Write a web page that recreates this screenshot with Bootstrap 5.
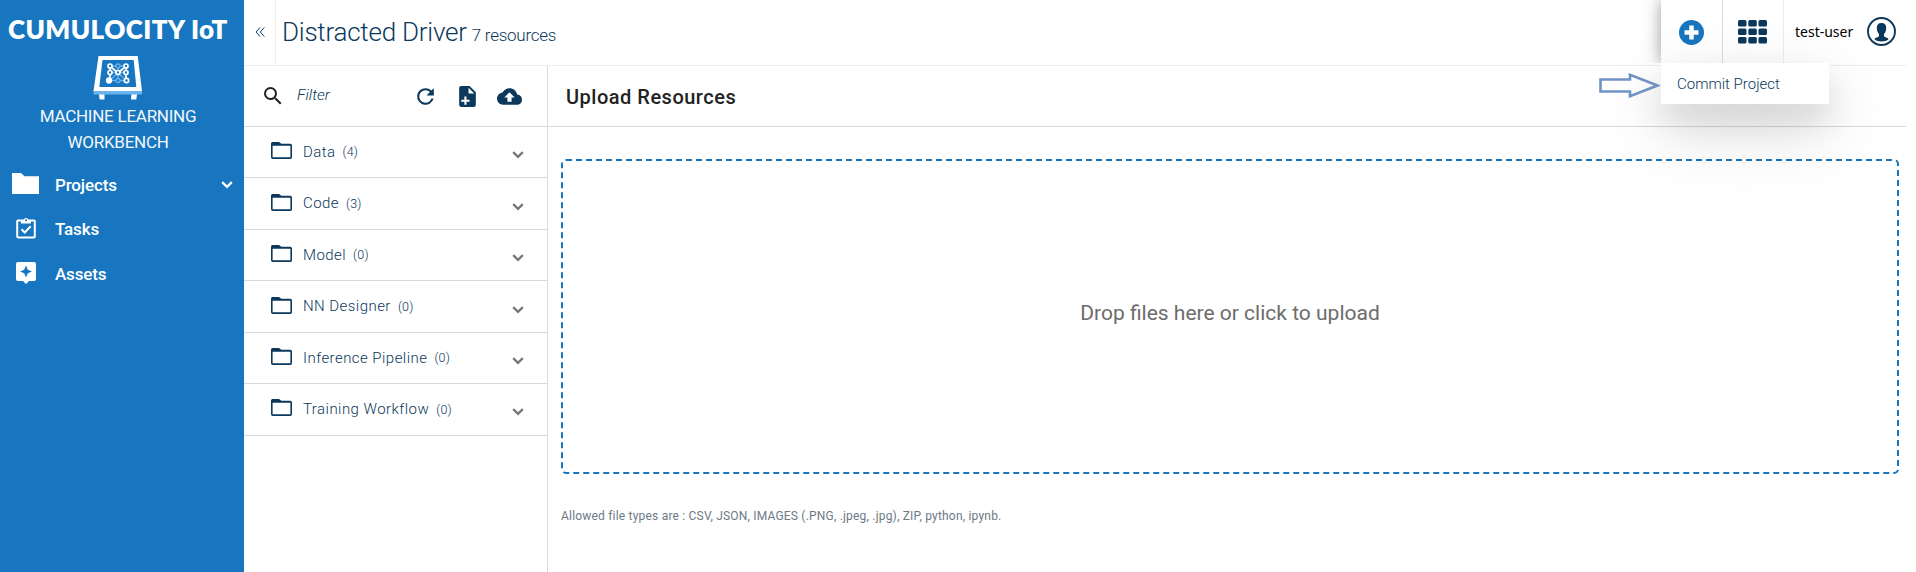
<!DOCTYPE html>
<html lang="en">
<head>
<meta charset="utf-8">
<meta name="viewport" content="width=device-width, initial-scale=1">
<title>Machine Learning Workbench</title>
<link href="https://cdn.jsdelivr.net/npm/bootstrap@5.3.0/dist/css/bootstrap.min.css" rel="stylesheet">
<style>
:root{--brand:#1776bf;--ink:#0b385b;--line:#d9d9d9}
body{font-family:Roboto,"Liberation Sans",sans-serif;font-size:16px;color:var(--ink);height:572px;overflow:hidden;background:#fff}
svg{display:block;flex:none}
.side{width:244px;background:var(--brand);color:#fff}
.logo{font:800 26px/30px Lato,sans-serif;padding:14px 0 0 8px;white-space:nowrap;letter-spacing:.4px}
.bench{margin:12px 0 0 93px}
.product{font-size:17px;line-height:26px;letter-spacing:-.25px;font-weight:400;opacity:.95;padding-right:8px;margin-top:3px}
.navlist{margin-top:8px}
.side .nav-link{height:44.5px;color:#fff;font-weight:500;font-size:17px;letter-spacing:-.15px;padding:0 11px 0 12px}
.side .ico{width:43px}
.side .ico svg{margin-top:-3px}
.topbar{height:66px;border-bottom:1px solid #eee;margin-right:10px}
.collapse-btn{width:32px;border-right:1px solid #eee;padding-bottom:2px}
.ttl{font-size:26px;font-weight:300;letter-spacing:-.24px;line-height:64px;margin:0 0 0 6px}
.ttl small{font-size:17px;letter-spacing:-.26px;margin-left:-1px}
.cell{width:61px}
.cell-open{background:#fff;box-shadow:0 0 16px rgba(0,0,0,.4);clip-path:inset(0 0 0 -40px);height:63px;padding-top:2px}
.cell-apps{border-left:1px solid #ddd;padding:0 2px 2px 0}
.menu{left:0;top:63px;width:168px;height:41px;background:#fff;padding-left:16px;font-size:15px;font-weight:300;line-height:42px;box-shadow:0 24px 70px rgba(0,0,0,.16),0 18px 32px rgba(0,0,0,.1);z-index:5}
.user{font:14px "Noto Sans",sans-serif;color:#000;border-left:1px solid #eee;padding:0 10px 2px 11px;width:123px}
.arrow{right:246px;top:73px;z-index:6}
.tree{width:304px;border-right:1px solid var(--line)}
.tools{height:61px;border-bottom:1px solid var(--line);padding:0 25px 0 17px}
.filter{font-style:italic;font-weight:300;font-size:15.500px;width:116px;margin-left:12px}
.rowitem{height:51.45px;border-bottom:1px solid var(--line);padding:0 23px 0 27px;font-size:15px}
.rowitem .dir{margin-top:-3px}
.rowitem .cv{margin-top:6px;color:#777}
.rowitem .nm{margin-left:11px;font-weight:300;letter-spacing:.45px}
.rowitem .ct{margin-left:7px;font-size:12.500px;font-weight:300;letter-spacing:.2px;padding-top:1px}
.head{height:61px;border-bottom:1px solid var(--line);margin-right:10px;padding:1px 0 0 18px;font-size:20px;font-weight:500;color:#222;letter-spacing:.5px}
.drop{margin:32px 17px 0 13px;height:315px;border:2px dashed var(--brand);border-radius:5px;font-size:21px;color:#6c6c6c;padding-bottom:6px}
.note{font-size:12px;color:#6c7a86;margin:33px 0 0 13px;letter-spacing:.2px}
</style>
</head>
<body>
<svg class="d-none">
<symbol id="dir" viewBox="0 0 21 17"><path d="M2 0h6l2.400 1.700H19.200a1.800 1.800 0 0 1 1.800 1.800v11.700a1.800 1.800 0 0 1-1.800 1.800H1.800A1.800 1.800 0 0 1 0 15.200V1.800A1.800 1.800 0 0 1 2 0zM1.600 3.700V15.200h17.800V3.700z" fill="#0b385b" fill-rule="evenodd"/></symbol>
<symbol id="chev" viewBox="0 0 12 8"><path d="M1.200 1.200L6 5.800l4.800-4.600" fill="none" stroke="currentColor" stroke-width="2.300"/></symbol>
</svg>
<div class="d-flex h-100">
  <aside class="side flex-shrink-0 d-flex flex-column">
    <div class="logo">CUMULOCITY IoT</div>
    <svg class="bench" width="50" height="44" viewBox="0 0 50 44">
      <path d="M5.500 35h6v8.500H6.700zM38.500 35H44.500l-1.200 8.500h-5.300z" fill="#fff"/>
      <path d="M.5 34h48.500v4.500H.5z" fill="#69b3ee"/>
      <path fill-rule="evenodd" d="M5.500 0h39.200L49 35H.5zM9.500 4L6.300 31h37L40.700 4z" fill="#fff"/>
      <g fill="none" stroke="#69b3ee" stroke-width="1.300"><path d="M17 10h16M17 24.500h16M25 10v14M17 16.500h16M17 24l8-7 8 7"/><circle cx="25" cy="10" r="2" fill="#1776bf"/><circle cx="25" cy="24.500" r="2" fill="#1776bf"/></g>
      <g fill="#1776bf" stroke="#fff" stroke-width="1.700"><path fill="none" d="M17 24.500V10l8 7 8-7v14.500"/><circle cx="17" cy="10" r="2"/><circle cx="33" cy="10" r="2"/><circle cx="17" cy="16.500" r="2"/><circle cx="25" cy="16.500" r="2"/><circle cx="33" cy="16.500" r="2"/><circle cx="33.500" cy="24.500" r="2.200"/><circle cx="16" cy="24.500" r="2.300" fill="#fff"/></g>
    </svg>
    <div class="product text-center">MACHINE LEARNING<br>WORKBENCH</div>
    <nav class="nav flex-column flex-nowrap navlist">
      <a class="nav-link d-flex align-items-center" href="#"><span class="ico"><svg width="27" height="21" viewBox="0 0 27 21"><path d="M0 0h9l3.500 3.200H27V21H0z" fill="#fff"/></svg></span>Projects<svg class="ms-auto" width="12" height="8"><use href="#chev"/></svg></a>
      <a class="nav-link d-flex align-items-center" href="#"><span class="ico ps-1"><svg width="20" height="22" viewBox="0 0 20 22"><path fill="none" stroke="#fff" stroke-width="2" d="M2 3.500h16a.8.8 0 0 1 .8.8V19.600a.8.8 0 0 1-.8.8H2a.8.800 0 0 1-.8-.8V4.300A.8.8 0 0 1 2 3.500z"/><path d="M5 6.500V3h2.500a2.600 2.600 0 0 1 5 0H15v3.500z" fill="#fff"/><circle cx="10" cy="3.200" r="1" fill="#1776bf"/><path d="M5.500 12.300l3.200 3.200 6-6.200" fill="none" stroke="#fff" stroke-width="2"/></svg></span>Tasks</a>
      <a class="nav-link d-flex align-items-center" href="#"><span class="ico ps-1"><svg width="20" height="22" viewBox="0 0 20 22"><path fill="#fff" d="M2 0h16a2 2 0 0 1 2 2v15a2 2 0 0 1-2 2h-5l-3 3-3-3H2a2 2 0 0 1-2-2V2a2 2 0 0 1 2-2z"/><path fill="#1776bf" d="M10 3.500l1.800 4.300L16 9.500l-4.200 1.800L10 15.500l-1.800-4.200L4 9.500l4.200-1.700z"/></svg></span>Assets</a>
    </nav>
  </aside>
  <div class="flex-grow-1 d-flex flex-column">
    <header class="topbar d-flex flex-shrink-0">
      <div class="collapse-btn d-flex align-items-center justify-content-center"><svg width="10" height="10" viewBox="0 0 10 10"><path d="M5 .5L1 5l4 4.500M9.300.5l-4 4.500 4 4.500" fill="none" stroke="#0b385b" stroke-width="1"/></svg></div>
      <h1 class="ttl">Distracted Driver <small class="fw-light">7 resources</small></h1>
      <div class="ms-auto d-flex position-relative">
        <div class="cell cell-open d-flex align-items-center justify-content-center"><svg width="25" height="25" viewBox="0 0 25 25"><circle cx="12.500" cy="12.500" r="12.500" fill="#1776bf"/><path d="M12.500 5.500v14M5.500 12.500h14" stroke="#fff" stroke-width="4.500"/></svg></div>
        <div class="cell cell-apps d-flex align-items-center justify-content-center"><svg width="29" height="24" viewBox="0 0 29 24" fill="#0b385b"><g id="r"><rect width="8.500" height="6.600" rx="1.500"/><rect x="10.300" width="8.500" height="6.600" rx="1.500"/><rect x="20.500" width="8.500" height="6.600" rx="1.500"/></g><use href="#r" y="8.500"/><use href="#r" y="17"/></svg></div>
        <div class="user d-flex align-items-center justify-content-between">test-user<svg width="29" height="29" viewBox="0 0 29 29"><circle cx="14.500" cy="14.500" r="13.500" fill="none" stroke="#0b385b" stroke-width="1.900"/><path fill="#0b385b" d="M14.500 6c3.300 0 4.900 2 4.700 5.200-.1 2.600-1 4.700-2.200 5.700v2.200c0 1.300 3.900 1.300 4.500 3.200-1.500 1.500-4 2.200-7 2.200s-5.500-.7-7-2.200c.6-1.900 4.500-1.900 4.500-3.200v-2.200c-1.200-1-2.100-3.100-2.200-5.700C9.600 8 11.200 6 14.500 6z"/></svg></div>
        <div class="menu position-absolute">Commit Project</div>
        <svg class="arrow position-absolute" width="61" height="25" viewBox="0 0 61 25"><path d="M1.500 6.500H31V1.800L58.500 12.500 31 23.200V18.500H1.500z" fill="none" stroke="#6f93c2" stroke-width="2.600"/></svg>
      </div>
    </header>
    <div class="d-flex flex-grow-1">
      <section class="tree flex-shrink-0">
        <div class="tools d-flex align-items-center">
          <svg width="24" height="24" viewBox="0 0 24 24"><path fill="#222" d="M15.500 14h-.79l-.28-.27A6.471 6.471 0 0 0 16 9.500 6.500 6.500 0 1 0 9.500 16c1.610 0 3.090-.59 4.230-1.570l.27.28v.79l5 4.990L20.490 19l-4.990-5zm-6 0C7.010 14 5 11.990 5 9.500S7.010 5 9.500 5 14 7.010 14 9.500 11.990 14 9.500 14z"/></svg>
          <span class="filter">Filter</span>
          <svg width="25" height="25" viewBox="0 0 24 24"><path fill="#0b385b" d="M17.650 6.350A7.958 7.958 0 0 0 12 4a8 8 0 1 0 7.730 10h-2.080A5.990 5.990 0 0 1 12 18a6 6 0 1 1 0-12c1.660 0 3.140.69 4.220 1.780L13 11h7V4l-2.350 2.350z"/></svg>
          <svg class="ms-auto" width="25" height="25" viewBox="0 0 24 24"><path fill="#0b385b" fill-rule="evenodd" d="M14 2H6c-1.100 0-2 .9-2 2v16c0 1.100.89 2 2 2h12c1.100 0 2-.9 2-2V8l-6-6zM13 9V3.500L18.500 9zM9 12h2v3h3v2h-3v3H9v-3H6v-2h3z"/></svg>
          <svg class="ms-auto" width="25" height="25" viewBox="0 0 24 24"><path fill="#0b385b" d="M19.350 10.040C18.670 6.590 15.640 4 12 4 9.110 4 6.600 5.640 5.350 8.040 2.340 8.360 0 10.910 0 14c0 3.310 2.690 6 6 6h13c2.760 0 5-2.240 5-5 0-2.640-2.050-4.780-4.650-4.960zM14 13v4h-4v-4H7l5-5 5 5h-3z"/></svg>
        </div>
        <div class="rowitem d-flex align-items-center"><svg class="dir" width="21" height="17"><use href="#dir"/></svg><span class="nm">Data</span><span class="ct">(4)</span><svg class="ms-auto cv" width="12" height="8"><use href="#chev"/></svg></div>
        <div class="rowitem d-flex align-items-center"><svg class="dir" width="21" height="17"><use href="#dir"/></svg><span class="nm">Code</span><span class="ct">(3)</span><svg class="ms-auto cv" width="12" height="8"><use href="#chev"/></svg></div>
        <div class="rowitem d-flex align-items-center"><svg class="dir" width="21" height="17"><use href="#dir"/></svg><span class="nm">Model</span><span class="ct">(0)</span><svg class="ms-auto cv" width="12" height="8"><use href="#chev"/></svg></div>
        <div class="rowitem d-flex align-items-center"><svg class="dir" width="21" height="17"><use href="#dir"/></svg><span class="nm">NN Designer</span><span class="ct">(0)</span><svg class="ms-auto cv" width="12" height="8"><use href="#chev"/></svg></div>
        <div class="rowitem d-flex align-items-center"><svg class="dir" width="21" height="17"><use href="#dir"/></svg><span class="nm">Inference Pipeline</span><span class="ct">(0)</span><svg class="ms-auto cv" width="12" height="8"><use href="#chev"/></svg></div>
        <div class="rowitem d-flex align-items-center"><svg class="dir" width="21" height="17"><use href="#dir"/></svg><span class="nm">Training Workflow</span><span class="ct">(0)</span><svg class="ms-auto cv" width="12" height="8"><use href="#chev"/></svg></div>
      </section>
      <main class="flex-grow-1">
        <div class="head d-flex align-items-center">Upload Resources</div>
        <div class="drop d-flex align-items-center justify-content-center">Drop files here or click to upload</div>
        <p class="note">Allowed file types are : CSV, JSON, IMAGES (.PNG, .jpeg, .jpg), ZIP, python, ipynb.</p>
      </main>
    </div>
  </div>
</div>
<script src="https://cdn.jsdelivr.net/npm/bootstrap@5.3.0/dist/js/bootstrap.bundle.min.js"></script>
</body>
</html>
